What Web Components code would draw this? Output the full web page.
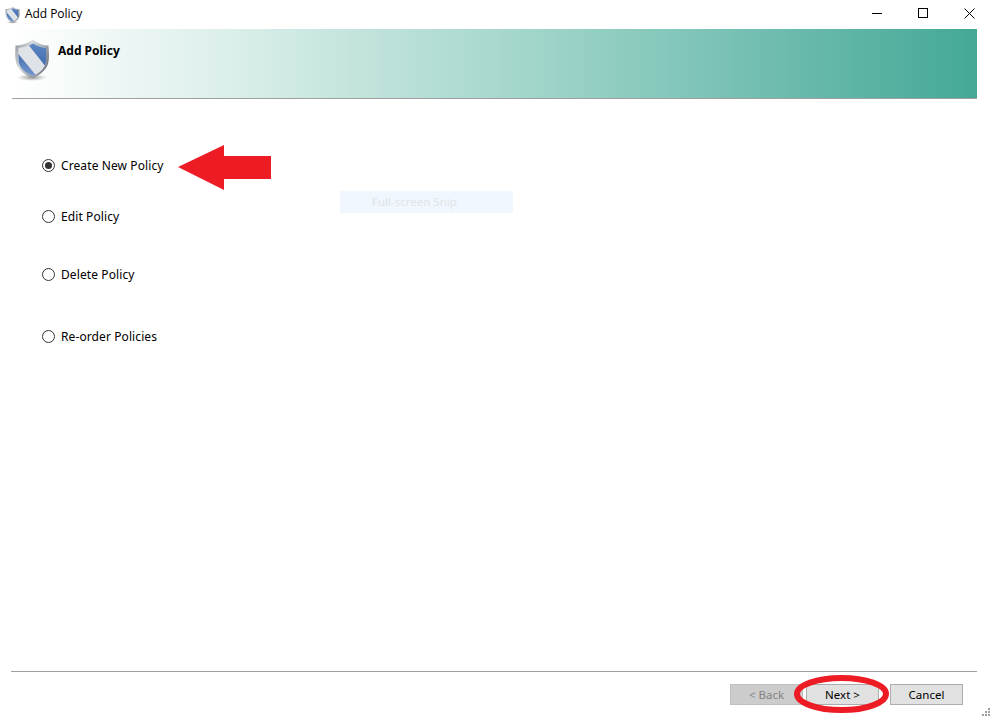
<!DOCTYPE html>
<html><head><meta charset="utf-8"><title>Add Policy</title>
<style>html,body{margin:0;padding:0;background:#fff;height:100%;overflow:hidden}</style>
</head><body>
<policy-window>
  <title-bar slot="top" label="Add Policy"></title-bar>
  <banner-header slot="top" label="Add Policy"></banner-header>
  <radio-list>
    <radio-option checked gap="0">Create New Policy</radio-option>
    <radio-option gap="38">Edit Policy</radio-option>
    <radio-option gap="45">Delete Policy</radio-option>
    <radio-option gap="49">Re-order Policies</radio-option>
  </radio-list>
  <wizard-footer slot="bottom">
    <wizard-button disabled>&lt; Back</wizard-button>
    <wizard-button>Next &gt;</wizard-button>
    <wizard-button class="last">Cancel</wizard-button>
  </wizard-footer>
  <snip-ghost slot="over"></snip-ghost>
  <red-annotations slot="over"></red-annotations>
</policy-window>
<script>
const FONT='"Noto Sans",Tahoma,sans-serif';
const shield = (size) => `<svg width="${size}" height="${Math.round(size*1.17)}" viewBox="0 0 36 42" aria-hidden="true" style="flex:none;display:block">
<defs>
<linearGradient id="rim" x1="0" y1="0" x2="1" y2="0.6"><stop offset="0" stop-color="#8d939b"/><stop offset=".4" stop-color="#d5d8dc"/><stop offset="1" stop-color="#777d86"/></linearGradient>
<linearGradient id="blue" x1="0" y1="0" x2="0" y2="1"><stop offset="0" stop-color="#5e86c4"/><stop offset="1" stop-color="#3a66ac"/></linearGradient>
<linearGradient id="blue2" x1="0" y1="0" x2="0" y2="1"><stop offset="0" stop-color="#3f6aae"/><stop offset="1" stop-color="#7f9fd2"/></linearGradient>
<clipPath id="inner"><path d="M19 4.500C15 7 9 8.500 4.500 9V21c0 7 6 12.500 14.500 16C27 33.500 32 28 32 21V9C27.500 8.500 23 7 19 4.500Z"/></clipPath>
<radialGradient id="sh"><stop offset="0" stop-color="#555" stop-opacity=".6"/><stop offset="1" stop-color="#666" stop-opacity="0"/></radialGradient>
</defs>
<ellipse cx="18" cy="38.500" rx="15" ry="3.500" fill="url(#sh)"/>
<path d="M19 1C14 4.500 7 6.500 1.500 6.500C1 14 1 20 2.500 25C5 31.500 11 36 18.500 39.500C26 36 32 31 34 25C35.500 20 35 14 34.500 6.500C29 6.500 23.500 4.500 19 1Z" fill="url(#rim)"/>
<g clip-path="url(#inner)">
<rect width="36" height="42" fill="#dfe2e6"/>
<path d="M13 4H36V33Z" fill="url(#blue)"/>
<path d="M2 12L25 40V42H2Z" fill="url(#blue2)"/>
</g></svg>`;
function def(name, html, extra){
  class E extends HTMLElement{
    constructor(){super();this.attachShadow({mode:'open'}).innerHTML=typeof html==='function'?html(this):html;}
    connectedCallback(){ if(extra) extra(this); }
  }
  customElements.define(name,E);
}
def('policy-window',`<style>
:host{display:flex;flex-direction:column;position:relative;width:992px;height:717px;background:#fff;overflow:hidden;font-family:${FONT};font-size:12px;color:#000}
.grow{flex:1;min-height:0}
</style><slot name="top"></slot><div class="grow"><slot></slot></div><slot name="bottom"></slot><slot name="over"></slot>`);

def('title-bar',e=>`<style>
:host{display:flex;align-items:center;height:29px;flex:none;padding-left:5px;font:12px "Open Sans","Liberation Sans",sans-serif;color:#000}
.t{margin-left:5px;flex:1;position:relative;top:-1px;letter-spacing:-.05px}
.c{display:flex;align-items:center;justify-content:center;width:46px;height:29px}
.ctl{display:flex;position:relative;top:-1px}
svg{display:block}
</style>${shield(15)}<span class="t">${e.getAttribute('label')}</span>
<div class="ctl">
<div class="c"><svg width="11" height="11"><path d="M0 5.500H10" stroke="#000" fill="none"/></svg></div>
<div class="c"><svg width="11" height="11"><rect x=".5" y=".5" width="9" height="9" stroke="#000" fill="none"/></svg></div>
<div class="c"><svg width="11" height="11"><path d="M.5 .5L10.500 10.500M10.500 .5L.5 10.500" stroke="#000" fill="none"/></svg></div>
</div>`);

def('banner-header',`<style>
:host{display:flex;flex:none;height:59px;margin:0 15px 0 12px;background:linear-gradient(90deg,#fff 0,#dcefeb 22%,#9fd4c9 55%,#44a897 100%);border-bottom:1px solid #a0a0a0;padding:10px 0 0 2px}
h1{margin:5px 0 0 8px;font:bold 12px/13px "Noto Sans",Tahoma,sans-serif}
</style><span id="s"></span><h1>Add Policy</h1>`,e=>{e.shadowRoot.getElementById('s').innerHTML=shield(36)});

def('radio-list',`<style>:host{display:flex;flex-direction:column;padding:60px 0 0 42px;align-items:flex-start}</style><slot></slot>`);

def('radio-option',e=>`<style>
:host{display:flex;align-items:center;height:13px;gap:6px;line-height:13px;letter-spacing:.1px}
.r{width:13px;height:13px;margin-bottom:1px;box-sizing:border-box;border:1px solid #333;border-radius:50%;background:#fff;display:flex;align-items:center;justify-content:center;flex:none}
.d{width:7px;height:7px;border-radius:50%;background:#333}
</style><span class="r">${e.hasAttribute('checked')?'<span class="d"></span>':''}</span><slot></slot>`,
e=>{e.style.marginTop=e.getAttribute('gap')+'px'});

def('wizard-footer',`<style>
:host{display:flex;flex:none;height:46px;margin:0 15px 0 11px;border-top:1px solid #a0a0a0;box-sizing:border-box;padding:12px 14px 0 0;justify-content:flex-end;gap:3px;align-items:flex-start}
</style><slot></slot>`);

def('wizard-button',`<style>
:host{display:flex;align-items:center;justify-content:center;width:73px;height:21px;box-sizing:border-box;border:1px solid #adadad;background:#e1e1e1;color:#000;font:11.500px ${FONT}}
:host([disabled]){background:#cccccc;border-color:#bfbfbf;color:#838383}
:host(.last){margin-left:8px}
</style><slot></slot>`);

def('snip-ghost',`<style>
:host{position:absolute;left:340px;top:191px;width:173px;height:22px;box-sizing:border-box;padding-left:32px;background:#f0f7fe;color:#e2e4e6;font:11.500px/22px ${FONT}}
</style>Full-screen Snip`);

def('red-annotations',`<style>
:host{position:absolute;inset:0;pointer-events:none}
svg{position:absolute;left:0;top:0}
</style><svg width="992" height="717">
<path d="M178 167L224 145V156H271V179H224V190Z" fill="#ed1c24"/>
<ellipse cx="841.500" cy="694" rx="44.500" ry="16" fill="none" stroke="#ed1c24" stroke-width="6"/>
<g fill="#a0a0a0"><rect x="988" y="708" width="2" height="2"/><rect x="985" y="711" width="2" height="2"/><rect x="988" y="711" width="2" height="2"/><rect x="982" y="714" width="2" height="2"/><rect x="985" y="714" width="2" height="2"/><rect x="988" y="714" width="2" height="2"/></g>
</svg>`);
</script>
</body></html>
